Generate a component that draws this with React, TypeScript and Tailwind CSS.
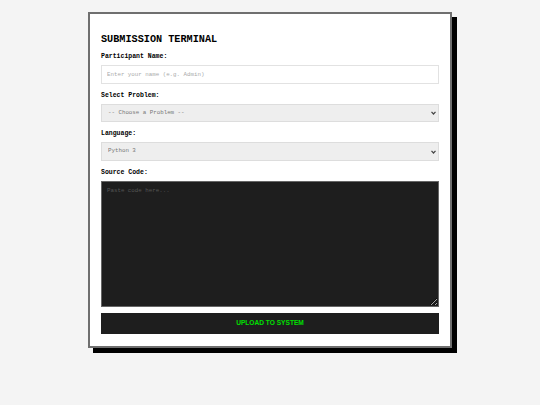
import { useState } from 'react';

const mono = 'font-["Liberation_Mono","Courier_New",monospace]';

function Field({ label, children }: { label: string; children: React.ReactNode }) {
    return (
        <div className="mb-[8px]">
            <label className={`${mono} block text-[6.5px] leading-[8px] font-bold text-black mb-[4px]`}>{label}</label>
            {children}
        </div>
    );
}

function Select({ options }: { options: string[] }) {
    return (
        <div className="relative">
            <select className={`${mono} block appearance-none w-full h-[18.5px] px-[6px] text-[5.8px] leading-[8px] text-[#777] bg-[#eee] border border-[#ddd] outline-none`}>
                {options.map((o) => <option key={o}>{o}</option>)}
            </select>
            <svg className="absolute right-[3px] top-[7.5px] pointer-events-none" width="5" height="4" viewBox="0 0 5 4">
                <path d="M0.5 0.8 L2.5 3 L4.5 0.8" fill="none" stroke="#444" strokeWidth="1.2" />
            </svg>
        </div>
    );
}

export default function App() {
    const [name, setName] = useState('');
    const [code, setCode] = useState('');

    return (
        <div className="min-h-screen bg-[#f4f4f4] flex justify-center pt-[12px]">
            <div className="w-[364px] h-[336px] bg-white border-2 border-[#6f6f6f] shadow-[5px_5px_0_#000] px-[11px] pt-[19.5px] pb-[11px] flex flex-col">
                <h2 className={`${mono} text-[10.2px] leading-[12px] font-bold text-black mb-[7.5px]`}>SUBMISSION TERMINAL</h2>

                <Field label="Participant Name:">
                    <input value={name} onChange={(e) => setName(e.target.value)} placeholder="Enter your name (e.g. Admin)"
                        className={`${mono} block w-full h-[18.5px] px-[5px] text-[5.8px] leading-[8px] bg-white border border-[#e2e2e2] outline-none placeholder:text-[#aaa]`} />
                </Field>

                <Field label="Select Problem:">
                    <Select options={['-- Choose a Problem --']} />
                </Field>

                <Field label="Language:">
                    <Select options={['Python 3', 'C++', 'Java']} />
                </Field>

                <Field label="Source Code:">
                    <textarea value={code} onChange={(e) => setCode(e.target.value)} placeholder="Paste code here..."
                        className={`${mono} block w-full h-[126px] p-[5px] text-[5.8px] leading-[8px] text-[#ddd] bg-[#1e1e1e] border border-[#666] outline-none placeholder:text-[#555]`} />
                </Field>

                <button className="block mt-[-1.5px] w-full h-[20.5px] bg-[#1e1e1e] text-[#00e000] font-['Liberation_Sans',Arial,sans-serif] font-bold text-[6.6px] leading-[8px]">
                    UPLOAD TO SYSTEM
                </button>
            </div>
        </div>
    );
}
